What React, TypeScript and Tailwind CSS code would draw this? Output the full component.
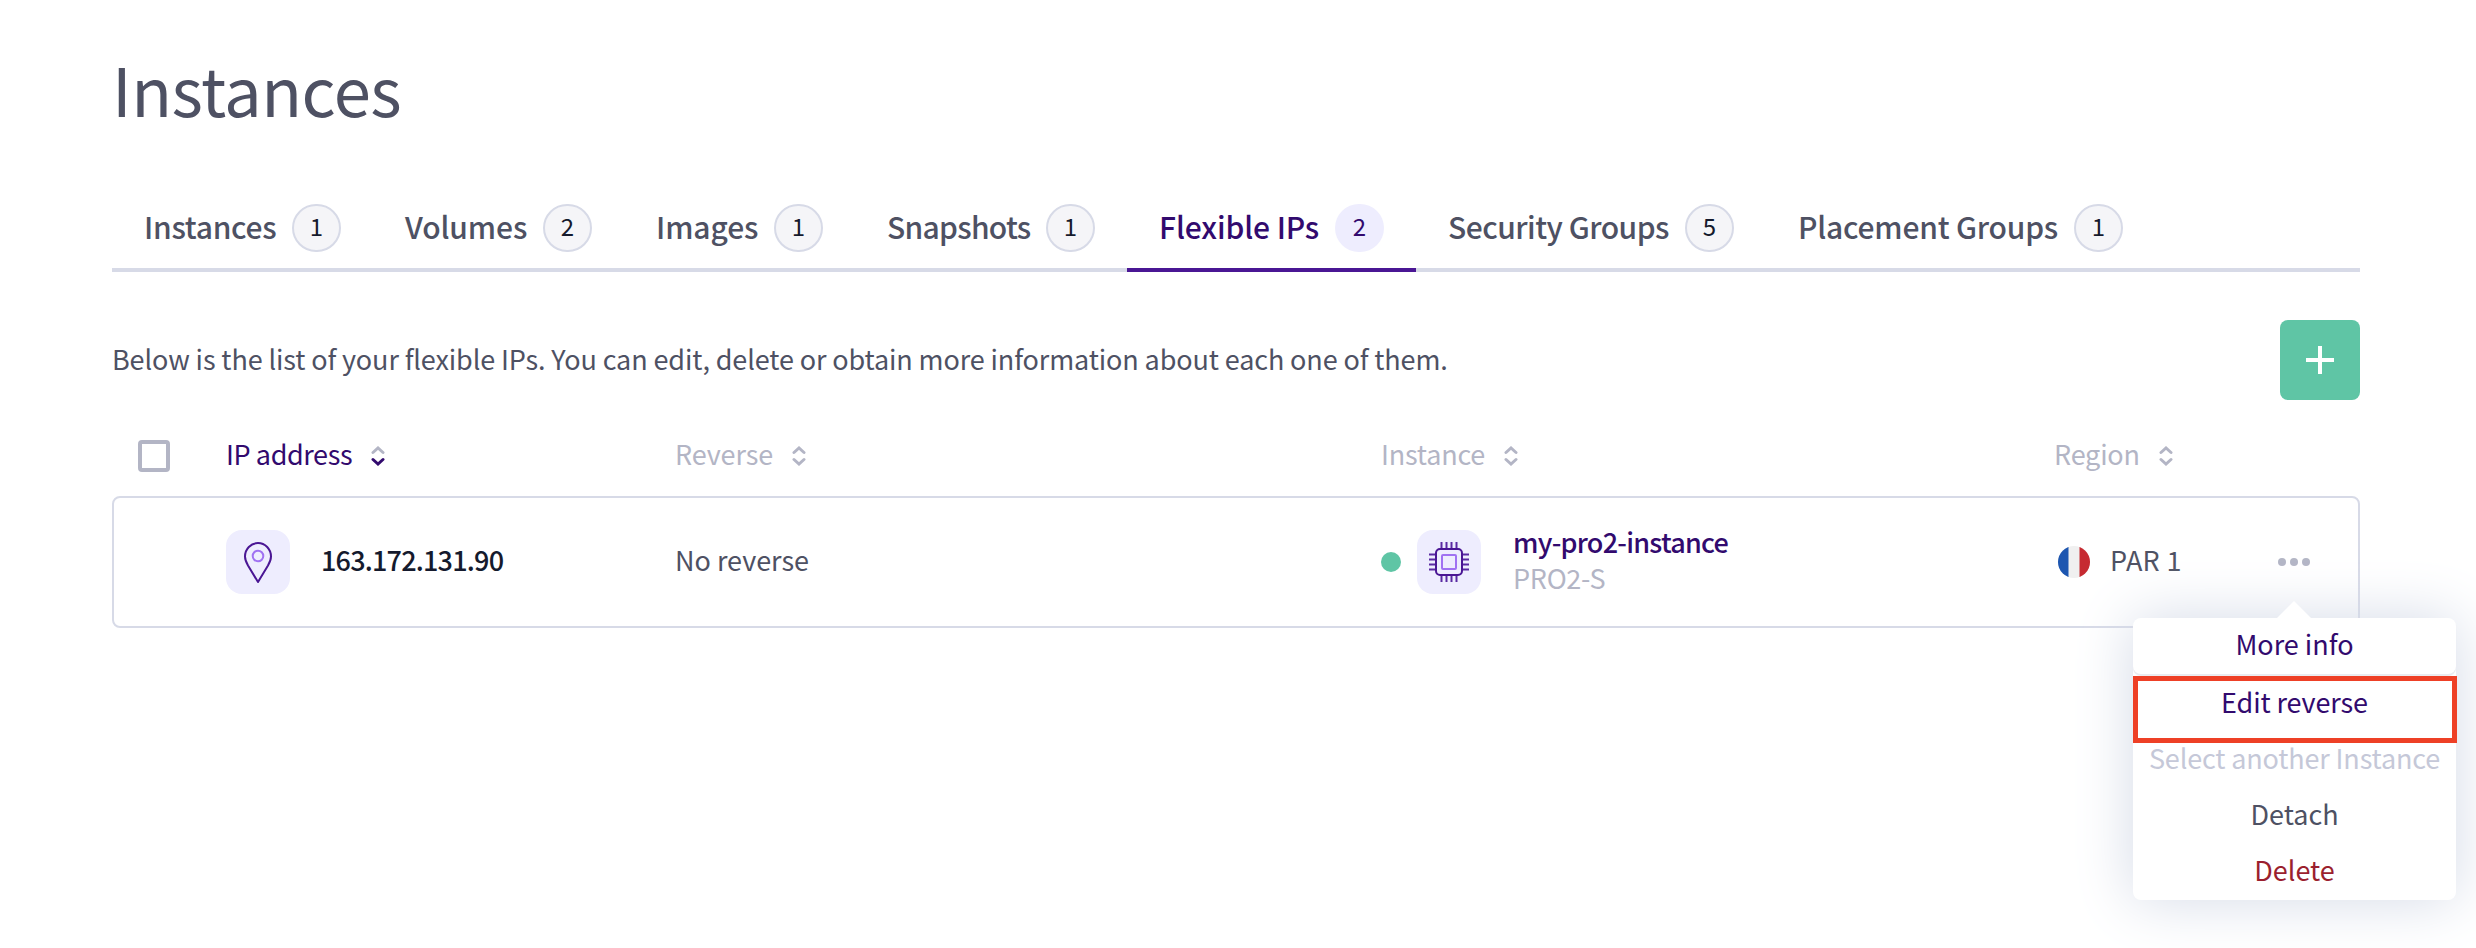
type Tab = { label: string; count: number; size: string; active?: boolean };

const tabs: Tab[] = [
  { label: "Instances", count: 1, size: "w-[261px] tracking-[-0.3px]" },
  { label: "Volumes", count: 2, size: "w-[251px] tracking-[-0.1px]" },
  { label: "Images", count: 1, size: "w-[231px] tracking-[-0.1px]" },
  { label: "Snapshots", count: 1, size: "w-[272px] tracking-[-0.7px]" },
  { label: "Flexible IPs", count: 2, size: "w-[289px] tracking-[-0.1px]", active: true },
  { label: "Security Groups", count: 5, size: "w-[350px] tracking-[-0.5px]" },
  { label: "Placement Groups", count: 1, size: "w-[389px] tracking-[-0.2px]" },
];

function TabItem({ label, count, size, active }: Tab) {
  return (
    <a
      className={`flex shrink-0 items-center justify-between border-b-4 px-8 ${size} ${
        active ? "border-[#4a1694] text-[#320a6e]" : "border-[#d7dae7] text-[#4e5163]"
      }`}
    >
      <span className="pb-1 text-[30px] leading-10 font-medium whitespace-nowrap">{label}</span>
      <span
        className={`flex h-12 w-[49px] shrink-0 items-center justify-center rounded-full pb-1 text-[24px] tracking-normal ${
          active ? "bg-[#eeedfe] text-[#320a6e]" : "border-2 border-[#d7dae7] bg-[#f5f5f8] text-[#151a2d]"
        }`}
      >
        {count}
      </span>
    </a>
  );
}

function SortLabel({ label, active, spacing = "" }: { label: string; active?: boolean; spacing?: string }) {
  return (
    <div className={`flex items-center gap-[19px] ${active ? "text-[#320a6e]" : "text-[#b3b5c5]"}`}>
      <span className={`pb-1 leading-10 ${spacing}`}>{label}</span>
      <svg width="14" height="20" viewBox="0 0 14 20" fill="none" strokeWidth="3" strokeLinecap="round">
        <path d="M2 6.5 7 2l5 4.5" stroke="#b3b5c5" />
        <path d="M2 13.5 7 18l5-4.5" stroke="currentColor" />
      </svg>
    </div>
  );
}

function PinIcon() {
  return (
    <svg className="size-16 rounded-2xl bg-[#eeedfe]" viewBox="0 0 64 64" fill="none" strokeWidth="2">
      <path d="M32 52 22 35.5C20 32 19 29.500 19 26.500a13 13.500 0 0 1 26 0C45 29.500 44 32 42 35.500Z" stroke="#4a1694" strokeLinejoin="round" />
      <circle cx="32" cy="26" r="5.300" stroke="#a072f2" />
    </svg>
  );
}

function ChipIcon() {
  return (
    <svg className="size-16 rounded-2xl bg-[#eeedfe]" viewBox="0 0 64 64" fill="none" strokeWidth="2">
      <path
        d="M24.500 12v6m5-6v6m5-6v6m5-6v6M24.500 46v6m5-6v6m5-6v6m5-6v6M12 24.500h6m-6 5h6m-6 5h6m-6 5h6M46 24.500h6m-6 5h6m-6 5h6m-6 5h6"
        stroke="#5a2aa2"
      />
      <rect x="19" y="19" width="26" height="26" rx="4" stroke="#4a1694" />
      <rect x="25" y="25" width="14" height="14" rx="1" stroke="#a072f2" />
    </svg>
  );
}

function FlagIcon() {
  return (
    <svg className="size-8 rounded-full" viewBox="0 0 32 32">
      <path d="M0 0h32v32H0z" fill="#f0f0f0" />
      <path d="M0 0h10.500v32H0z" fill="#1d56b0" />
      <path d="M21.500 0H32v32H21.500z" fill="#c62a31" />
    </svg>
  );
}

function ActionsMenu() {
  const item = "flex h-14 items-center justify-center pb-1 whitespace-nowrap";
  return (
    <div className="absolute top-[88px] -left-[145px] flex h-[282px] w-[323px] flex-col rounded-lg bg-white shadow-[0_0_60px_#d4dae7]">
      <svg className="absolute -top-[17px] left-[143px]" width="36" height="18" viewBox="0 0 36 18">
        <path d="M18 0 36 18H0z" fill="#fff" />
      </svg>
      <div className={`${item} mb-0.5 rounded-lg text-[#320a6e] shadow-[0_2px_1px_#e9ebf0]`}>More info</div>
      <div className={`${item} tracking-[-0.1px] text-[#320a6e]`}>Edit reverse</div>
      <div className={`${item} tracking-[-0.15px] text-[#c5c8d8]`}>Select another Instance</div>
      <div className={`${item} text-[#4e5163]`}>Detach</div>
      <div className={`${item} text-[#9b1f2e]`}>Delete</div>
      <div className="absolute top-[58px] left-0 h-[67px] w-[324px] border-5 border-[#ee4026]" />
    </div>
  );
}

export default function App() {
  return (
    <main className="h-[948px] overflow-hidden bg-white pt-12 pr-[116px] pl-28 font-['Noto_Sans_CJK_SC','Noto_Sans',sans-serif] text-[27px] leading-10 text-[#4e5163]">
      <h1 className="text-[67px] leading-20 tracking-[-0.5px]">Instances</h1>

      <nav className="mt-[60px] flex h-[84px]">
        {tabs.map((tab) => (
          <TabItem key={tab.label} {...tab} />
        ))}
        <div className="grow border-b-4 border-[#d7dae7]" />
      </nav>

      <div className="mt-12 flex h-20 items-center justify-between">
        <p className="pb-[3px] tracking-[-0.12px]">
          Below is the list of your flexible IPs. You can edit, delete or obtain more information about each one of them.
        </p>
        <button className="flex size-20 items-center justify-center rounded-lg bg-[#5fc5a5]">
          <svg width="28" height="28" viewBox="0 0 28 28" stroke="#fff" strokeWidth="4">
            <path d="M14 0v28M0 14h28" />
          </svg>
        </button>
      </div>

      <div className="mt-4 grid h-20 grid-cols-[114px_449px_706px_673px_1fr] items-center">
        <div className="ml-[26px] size-8 rounded-sm border-4 border-[#b3b5c5]" />
        <SortLabel label="IP address" active spacing="tracking-[-0.4px]" />
        <SortLabel label="Reverse" spacing="tracking-[-0.1px]" />
        <SortLabel label="Instance" spacing="tracking-[-0.2px]" />
        <SortLabel label="Region" spacing="tracking-[-0.2px]" />
      </div>

      <div className="grid h-[132px] grid-cols-[112px_449px_705px_677px_221px_1fr] items-center rounded-lg border-2 border-[#d7dae7]">
        <div />
        <div className="flex items-center gap-[31px]">
          <PinIcon />
          <span className="pb-1 font-medium tracking-[-0.8px] text-[#151a2d]">163.172.131.90</span>
        </div>
        <span className="pb-1">No reverse</span>
        <div className="flex items-center pl-px">
          <span className="mr-4 size-5 rounded-full bg-[#5fc5a5]" />
          <ChipIcon />
          <div className="ml-8 pb-1 leading-9">
            <div className="font-medium tracking-[-0.75px] text-[#320a6e]">my-pro2-instance</div>
            <div className="tracking-[-0.3px] text-[#b3b5c5]">PRO2-S</div>
          </div>
        </div>
        <div className="flex items-center gap-5 pl-px">
          <FlagIcon />
          <span className="pb-1 tracking-[0.3px]">PAR 1</span>
        </div>
        <div className="relative flex h-16 w-8 items-center gap-1">
          <span className="size-2 rounded-full bg-[#b3b5c5]" />
          <span className="size-2 rounded-full bg-[#b3b5c5]" />
          <span className="size-2 rounded-full bg-[#b3b5c5]" />
          <ActionsMenu />
        </div>
      </div>
    </main>
  );
}
